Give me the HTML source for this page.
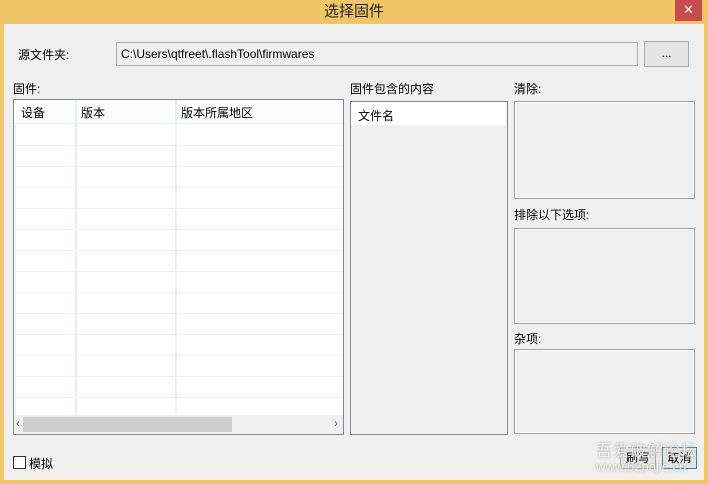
<!DOCTYPE html>
<html><head><meta charset="utf-8"><style>
*{box-sizing:border-box;margin:0;padding:0}
html,body{width:708px;height:484px}
body{background:#f0c566;font-family:"Liberation Sans","Noto Sans CJK SC",sans-serif;font-size:12px;color:#000;position:relative;overflow:hidden}
.a{position:absolute;white-space:nowrap}
.client{left:4px;top:24px;width:700px;height:456px;background:#f0f0f0}
.title{left:0;top:0;width:708px;height:24px;text-align:center;line-height:24px;font-size:15px;color:#222}
.close{left:675px;top:0;width:27px;height:21px;background:#c74d4d;color:#fff;text-align:center;line-height:20px;font-size:13px}
.box{border:1px solid #a0a0a0;box-shadow:inset 0 0 0 1px #fff}
.hl{height:1px;background:#eef0f4;left:1px;width:328px}
.vl{width:2px;background:#e8eef8}
</style></head><body>
<div class="a title">选择固件</div>
<div class="a close">✕</div>
<div class="a client"></div>
<div class="a" style="left:18px;top:46px">源文件夹:</div>
<div class="a" style="left:116px;top:42px;width:522px;height:24px;border:1px solid #abadb3;background:#f0f0f0;padding:3px 4px;line-height:16px">C:\Users\qtfreet\.flashTool\firmwares</div>
<div class="a" style="left:644px;top:41px;width:45px;height:26px;border:1px solid #acacac;background:#e5e5e5;text-align:center;line-height:22px">...</div>
<div class="a" style="left:13px;top:80px">固件:</div>
<div class="a" style="left:13px;top:99px;width:331px;height:336px;border:1px solid #828790;background:#fff;overflow:hidden">
  <div class="a" style="left:0;top:0;width:329px;height:24px;background:#fcfcfc;border-bottom:1px solid #eaf0f8"></div>
  <div class="a" style="left:7px;top:4px">设备</div>
  <div class="a" style="left:67px;top:4px">版本</div>
  <div class="a" style="left:167px;top:4px">版本所属地区</div>
  <div class="a vl" style="left:61px;top:0;height:316px"></div>
  <div class="a vl" style="left:161px;top:0;height:316px"></div>
  <div class="a vl" style="left:1px;top:25px;width:1px;height:291px"></div>
  <div class="a hl" style="top:45px"></div><div class="a hl" style="top:66px"></div><div class="a hl" style="top:87px"></div><div class="a hl" style="top:108px"></div><div class="a hl" style="top:129px"></div><div class="a hl" style="top:150px"></div><div class="a hl" style="top:171px"></div><div class="a hl" style="top:192px"></div><div class="a hl" style="top:213px"></div><div class="a hl" style="top:234px"></div><div class="a hl" style="top:255px"></div><div class="a hl" style="top:276px"></div><div class="a hl" style="top:297px"></div>
  <div class="a" style="left:0;top:315px;width:329px;height:19px;background:#f0f0f0"></div>
  <div class="a" style="left:9px;top:317px;width:209px;height:15px;background:#cdcdcd"></div>
  <div class="a" style="left:2px;top:316px;color:#606060;font-size:12px">‹</div>
  <div class="a" style="left:320px;top:316px;color:#606060;font-size:12px">›</div>
</div>
<div class="a" style="left:350px;top:80px">固件包含的内容</div>
<div class="a" style="left:350px;top:101px;width:158px;height:334px;border:1px solid #828790;background:#f0f0f0">
  <div class="a" style="left:0;top:0;width:155px;height:24px;background:#fff;border-bottom:1px solid #eaf0f8"></div>
  <div class="a" style="left:7px;top:5px">文件名</div>
</div>
<div class="a" style="left:514px;top:80px">清除:</div>
<div class="a box" style="left:514px;top:101px;width:181px;height:98px"></div>
<div class="a" style="left:514px;top:206px">排除以下选项:</div>
<div class="a box" style="left:514px;top:228px;width:181px;height:96px"></div>
<div class="a" style="left:514px;top:330px">杂项:</div>
<div class="a box" style="left:514px;top:349px;width:181px;height:85px"></div>
<div class="a" style="left:13px;top:456px;width:13px;height:13px;border:1px solid #333;background:#fff"></div>
<div class="a" style="left:29px;top:455px">模拟</div>
<div class="a" style="left:620px;top:447px;width:36px;height:22px;border:1px solid #acacac;background:#e5e5e5;text-align:center;line-height:20px">刷写</div>
<div class="a" style="left:662px;top:447px;width:35px;height:22px;border:1px solid #3c7fb1;background:#e5e5e5;text-align:center;line-height:20px">取消</div>
<div class="a" style="left:596px;top:437px;color:rgba(255,255,255,.75);font-size:16px;letter-spacing:1px;text-shadow:0 0 2px #999">吾爱破解论坛</div>
<div class="a" style="left:596px;top:459px;color:rgba(255,255,255,.75);font-size:13px;text-shadow:0 0 2px #999">www.52pojie.cn</div>
</body></html>
